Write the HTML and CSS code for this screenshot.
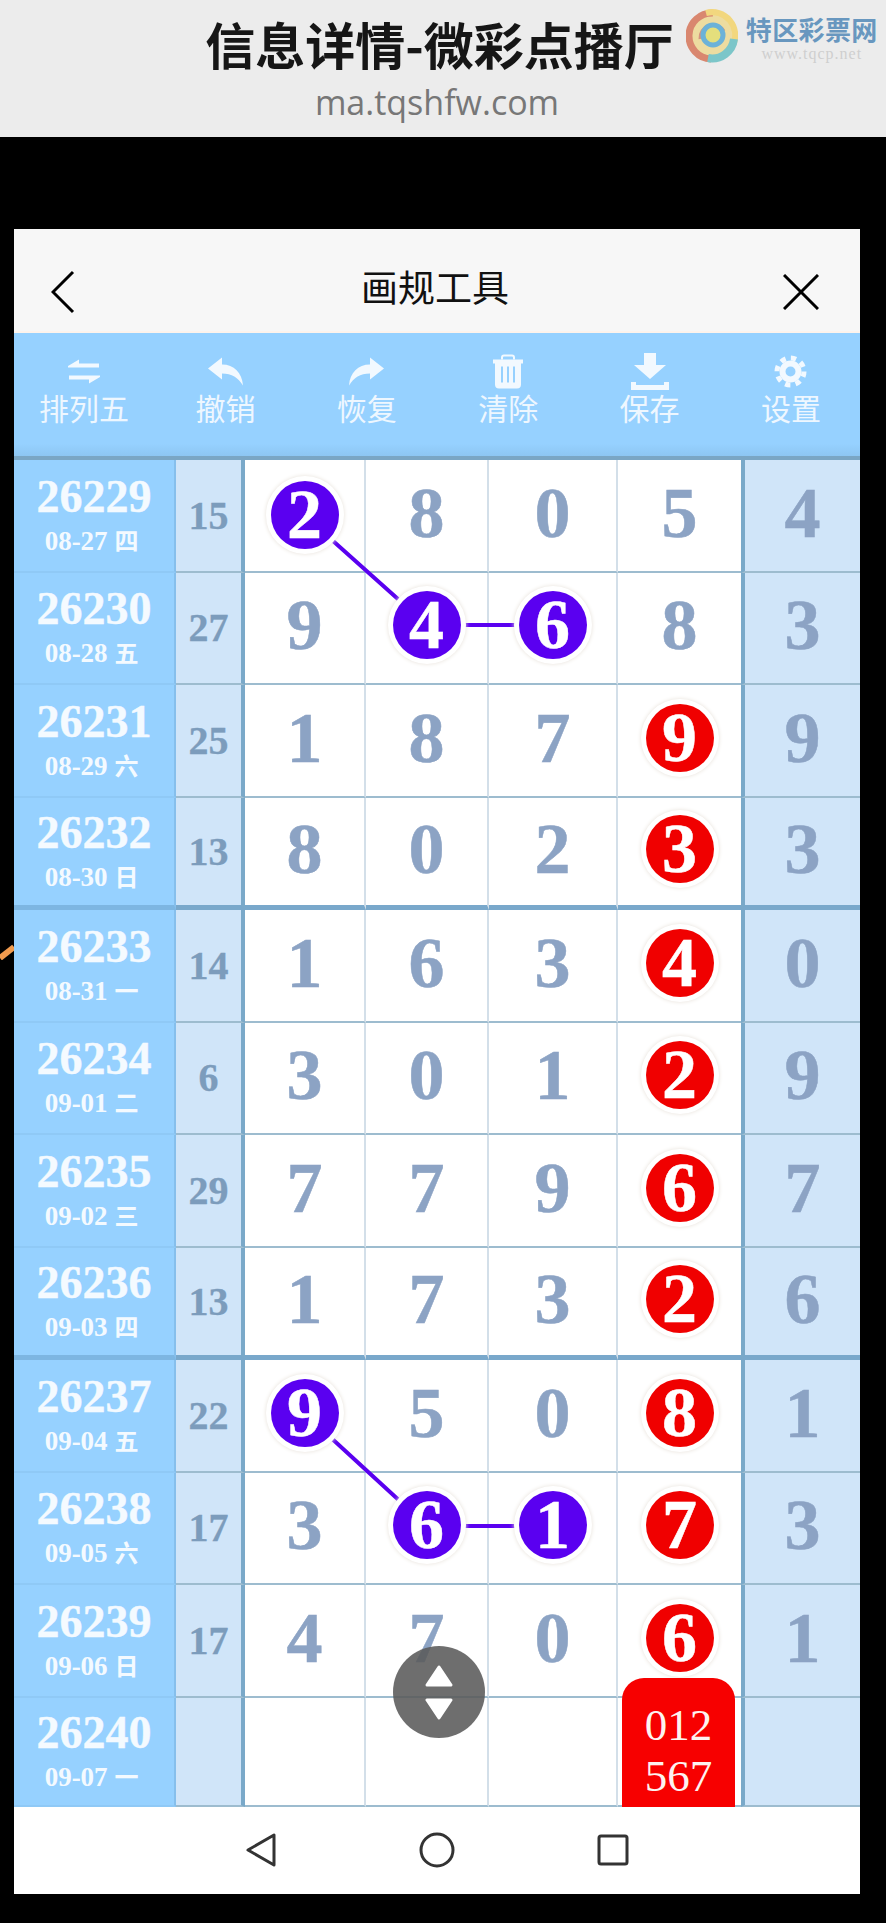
FILE: index.html
```html
<!DOCTYPE html>
<html>
<head>
    <meta charset="utf-8">
    <title>画规工具</title>
    <link rel="stylesheet" href="styles.css">
</head>
<body>
    <div class="site">
        <div class="site-title">信息详情-微彩点播厅</div>
        <div class="logo">
            <svg class="logo-mark" width="52" height="54" viewBox="0 0 52 54">
                <circle cx="26" cy="27" r="25" fill="#eddca0"/>
                <path d="M27 4A23 23 0 0 0 25 50" fill="none" stroke="#d9876f" stroke-width="7"/>
                <path d="M20 4A23 23 0 0 1 47 36" fill="none" stroke="#f2d77e" stroke-width="6"/>
                <path d="M48 30A22 22 0 0 1 22 49" fill="none" stroke="#7cc6c9" stroke-width="8"/>
                <path d="M14 30A13 13 0 0 1 38 22" fill="none" stroke="#d5947f" stroke-width="3"/>
                <circle cx="27" cy="26" r="10" fill="#e4df7c" stroke="#6cb2d8" stroke-width="5"/>
            </svg>
            <div class="logo-text">
                <div class="logo-name">特区彩票网</div>
                <div class="logo-url">www.tqcp.net</div>
            </div>
        </div>
        <div class="site-url">ma.tqshfw.com</div>
    </div>

    <svg class="stray" width="14" height="16" viewBox="0 0 14 16">
        <path d="M0 14L14 3" stroke="#f09a4e" stroke-width="6"/>
    </svg>

    <div class="app">
        <div class="top-bar">
            <svg width="24" height="44" viewBox="0 0 24 44">
                <path d="M22 2L2 22L22 42" fill="none" stroke="#000" stroke-width="3"/>
            </svg>
            <div class="top-title">画规工具</div>
            <svg class="close" width="36" height="36" viewBox="0 0 36 36">
                <path d="M1 1L35 35M35 1L1 35" fill="none" stroke="#000" stroke-width="3"/>
            </svg>
        </div>

        <div class="toolbar">
            <div class="tool">
                <svg width="32" height="24" viewBox="0 0 32 24">
                    <path d="M0 6.5L11 0V4H31V8H0Z M32 17.500L21 24V20H1V16H32Z" fill="#f2f9ff"/>
                </svg>
                <span>排列五</span>
            </div>
            <div class="tool">
                <svg width="35" height="28" viewBox="0 0 35 28">
                    <path d="M0 11L14 0V7C26 7 34 15 35 28C30 20 24 16 14 16V22Z" fill="#f2f9ff"/>
                </svg>
                <span>撤销</span>
            </div>
            <div class="tool">
                <svg width="35" height="28" viewBox="0 0 35 28">
                    <path d="M35 11L21 0V7C9 7 1 15 0 28C5 20 11 16 21 16V22Z" fill="#f2f9ff"/>
                </svg>
                <span>恢复</span>
            </div>
            <div class="tool">
                <svg width="30" height="34" viewBox="0 0 30 34">
                    <path d="M9 5V3Q9 1 11 1H19Q21 1 21 3V5" fill="none" stroke="#f2f9ff" stroke-width="2"/>
                    <path d="M0 5H30V9H28V30Q28 34 24 34H6Q2 34 2 30V9H0Z" fill="#f2f9ff"/>
                    <path d="M9 12V28M15 12V28M21 12V28" stroke="#96d1ff" stroke-width="2"/>
                </svg>
                <span>清除</span>
            </div>
            <div class="tool">
                <svg width="38" height="37" viewBox="0 0 38 37">
                    <path d="M13 0H25V12H35L19 26L3 12H13Z" fill="#f2f9ff"/>
                    <path d="M0 29H5V32H33V29H38V37H0Z" fill="#f2f9ff"/>
                </svg>
                <span>保存</span>
            </div>
            <div class="tool">
                <svg width="33" height="33" viewBox="0 0 33 33">
                    <circle cx="16.500" cy="16.500" r="8" fill="none" stroke="#f2f9ff" stroke-width="6"/>
                    <circle cx="16.500" cy="16.500" r="13.500" fill="none" stroke="#f2f9ff" stroke-width="5" stroke-dasharray="5.300 5.300"/>
                </svg>
                <span>设置</span>
            </div>
        </div>

        <div class="board">
            <div class="row">
                <div class="issue"><b>26229</b><i>08-27 <em>四</em></i></div>
                <div class="sum">15</div>
                <div class="cell"><span class="ball purple">2</span></div>
                <div class="cell">8</div><div class="cell">0</div><div class="cell">5</div>
                <div class="side">4</div>
            </div>
            <div class="row">
                <div class="issue"><b>26230</b><i>08-28 <em>五</em></i></div>
                <div class="sum">27</div>
                <div class="cell">9</div>
                <div class="cell"><span class="ball purple">4</span></div>
                <div class="cell"><span class="ball purple">6</span></div>
                <div class="cell">8</div>
                <div class="side">3</div>
            </div>
            <div class="row">
                <div class="issue"><b>26231</b><i>08-29 <em>六</em></i></div>
                <div class="sum">25</div>
                <div class="cell">1</div><div class="cell">8</div><div class="cell">7</div>
                <div class="cell"><span class="ball red">9</span></div>
                <div class="side">9</div>
            </div>
            <div class="row thick">
                <div class="issue"><b>26232</b><i>08-30 <em>日</em></i></div>
                <div class="sum">13</div>
                <div class="cell">8</div><div class="cell">0</div><div class="cell">2</div>
                <div class="cell"><span class="ball red">3</span></div>
                <div class="side">3</div>
            </div>
            <div class="row">
                <div class="issue"><b>26233</b><i>08-31 <em>一</em></i></div>
                <div class="sum">14</div>
                <div class="cell">1</div><div class="cell">6</div><div class="cell">3</div>
                <div class="cell"><span class="ball red">4</span></div>
                <div class="side">0</div>
            </div>
            <div class="row">
                <div class="issue"><b>26234</b><i>09-01 <em>二</em></i></div>
                <div class="sum">6</div>
                <div class="cell">3</div><div class="cell">0</div><div class="cell">1</div>
                <div class="cell"><span class="ball red">2</span></div>
                <div class="side">9</div>
            </div>
            <div class="row">
                <div class="issue"><b>26235</b><i>09-02 <em>三</em></i></div>
                <div class="sum">29</div>
                <div class="cell">7</div><div class="cell">7</div><div class="cell">9</div>
                <div class="cell"><span class="ball red">6</span></div>
                <div class="side">7</div>
            </div>
            <div class="row thick">
                <div class="issue"><b>26236</b><i>09-03 <em>四</em></i></div>
                <div class="sum">13</div>
                <div class="cell">1</div><div class="cell">7</div><div class="cell">3</div>
                <div class="cell"><span class="ball red">2</span></div>
                <div class="side">6</div>
            </div>
            <div class="row">
                <div class="issue"><b>26237</b><i>09-04 <em>五</em></i></div>
                <div class="sum">22</div>
                <div class="cell"><span class="ball purple">9</span></div>
                <div class="cell">5</div><div class="cell">0</div>
                <div class="cell"><span class="ball red">8</span></div>
                <div class="side">1</div>
            </div>
            <div class="row">
                <div class="issue"><b>26238</b><i>09-05 <em>六</em></i></div>
                <div class="sum">17</div>
                <div class="cell">3</div>
                <div class="cell"><span class="ball purple">6</span></div>
                <div class="cell"><span class="ball purple">1</span></div>
                <div class="cell"><span class="ball red">7</span></div>
                <div class="side">3</div>
            </div>
            <div class="row">
                <div class="issue"><b>26239</b><i>09-06 <em>日</em></i></div>
                <div class="sum">17</div>
                <div class="cell">4</div><div class="cell">7</div><div class="cell">0</div>
                <div class="cell"><span class="ball red">6</span></div>
                <div class="side">1</div>
            </div>
            <div class="row last">
                <div class="issue"><b>26240</b><i>09-07 <em>一</em></i></div>
                <div class="sum"></div>
                <div class="cell"></div><div class="cell"></div><div class="cell"></div>
                <div class="cell"><div class="pick">012<br>567</div></div>
                <div class="side"></div>
            </div>

            <!-- lines between picked balls -->
            <svg class="links" width="846" height="1351" viewBox="0 0 846 1351">
                <path d="M290 59L413 169H539" fill="none" stroke="#5a00f0" stroke-width="4"/>
                <path d="M290 957L413 1070H539" fill="none" stroke="#5a00f0" stroke-width="4"/>
            </svg>

            <div class="fab">
                <svg width="30" height="55" viewBox="0 0 30 55">
                    <path d="M15 2L27 20H3Z M3 35H27L15 53Z" fill="#fff" stroke="#fff" stroke-width="3" stroke-linejoin="round"/>
                </svg>
            </div>
        </div>

        <div class="nav">
            <svg width="32" height="36" viewBox="0 0 32 36">
                <path d="M29 3V33L3 18Z" fill="none" stroke="#333" stroke-width="3" stroke-linejoin="round"/>
            </svg>
            <svg width="36" height="36" viewBox="0 0 36 36">
                <circle cx="18" cy="18" r="16" fill="none" stroke="#333" stroke-width="3"/>
            </svg>
            <svg width="32" height="32" viewBox="0 0 32 32">
                <rect x="2" y="2" width="28" height="28" rx="2" fill="none" stroke="#333" stroke-width="3"/>
            </svg>
        </div>
    </div>
</body>
</html>
```
FILE: styles.css
```css
body {
    margin: 0;
    width: 886px;
    height: 1923px;
    background-color: #000;
    font-family: "Noto Sans CJK SC", sans-serif;
    position: relative;
    overflow: hidden;
}

/* site banner */
.site {
    height: 137px;
    background-color: #ececec;
    display: grid;
    grid-template-columns: 1fr auto 1fr;
    grid-template-rows: 90px 47px;
    box-sizing: border-box;
    padding-right: 7px;
}
.site-title {
    grid-column: 2;
    font-size: 50px;
    font-weight: 700;
    line-height: 86px;
    color: #161616;
}
.logo {
    grid-column: 3;
    display: flex;
    gap: 8px;
    margin-left: 12px;
    padding-top: 9px;
    width: 192px;
    white-space: nowrap;
}
.logo-mark {
    flex: none;
}
.logo-text {
    padding-top: 4px;
}
.logo-name {
    font-size: 26px;
    font-weight: 700;
    line-height: 32px;
    color: #6897bf;
    letter-spacing: 0.4px;
}
.logo-url {
    font-family: "Liberation Serif", serif;
    font-size: 16px;
    line-height: 18px;
    color: #cfcfcf;
    letter-spacing: 1px;
    text-align: center;
}
.site-url {
    grid-column: 1 / 4;
    font-family: "Open Sans", sans-serif;
    font-size: 34px;
    font-weight: 500;
    line-height: 24px;
    color: #777;
    text-align: center;
    padding-right: 5px;
}

.stray {
    position: absolute;
    left: 0;
    top: 944px;
}

/* app window */
.app {
    position: absolute;
    left: 14px;
    top: 229px;
    width: 846px;
    height: 1665px;
    display: flex;
    flex-direction: column;
    background-color: #fff;
}
.top-bar {
    height: 104px;
    flex: none;
    box-sizing: border-box;
    background-color: #f7f7f7;
    border-bottom: 2px solid #fdf3ec;
    display: grid;
    grid-template-columns: 1fr auto 1fr;
    align-items: center;
    padding: 24px 41px 0 37px;
}
.top-title {
    font-size: 37px;
    line-height: 44px;
    color: #111;
    margin-bottom: 12px;
}
.close {
    justify-self: end;
}

.toolbar {
    height: 123px;
    flex: none;
    box-sizing: border-box;
    display: flex;
    justify-content: space-between;
    padding: 0 4px 0 5px;
    background: linear-gradient(#96d1ff 90%, #8dc6f2);
}
.tool {
    width: 130px;
    display: flex;
    flex-direction: column;
    align-items: center;
    color: #eef7ff;
    font-size: 30px;
    line-height: 40px;
}
.tool svg {
    height: 37px;
    margin-top: 20px;
}
.tool span {
    margin-top: -3px;
}

/* results table */
.board {
    flex: none;
    position: relative;
    border-top: 4px solid #7aa6c4;
    box-sizing: border-box;
    height: 1351px;
    font-family: "Liberation Serif", serif;
}
.row {
    display: grid;
    grid-template-columns: 162px 69px 121px 123px 129px 123px 119px;
    height: 112.500px;
    box-sizing: border-box;
}
.row.last {
    height: 109.500px;
}
.issue, .sum, .cell, .side {
    display: flex;
    align-items: center;
    justify-content: center;
    box-sizing: border-box;
    font-weight: 700;
    border-bottom: 2px solid #9dbccf;
    position: relative;
}
.thick .issue, .thick .sum, .thick .cell, .thick .side {
    border-bottom: 5px solid #79a8cb;
}
.issue {
    flex-direction: column;
    background-color: #96d1ff;
    border-bottom: 2px solid #8fc9f6;
    border-right: 2px solid #86bfec;
    color: #f4faff;
}
.thick .issue {
    border-bottom-color: #7db6e2;
}
.issue b {
    font-size: 46px;
    line-height: 46px;
    margin-top: 4px;
    -webkit-text-stroke: 0.4px #f4faff;
}
.issue i {
    font-style: normal;
    font-size: 27px;
    line-height: 40px;
    margin-right: 5px;
}
.issue em {
    font-family: "Noto Sans CJK SC", sans-serif;
    font-style: normal;
    font-size: 24px;
}
.sum {
    background-color: #d0e5f9;
    color: #7c9cbc;
    font-size: 40px;
    border-right: 4px solid #7aa9c9;
    -webkit-text-stroke: 0.3px #7c9cbc;
}
.cell {
    background-color: #fff;
    color: #8ca3c4;
    font-size: 72px;
    line-height: 72px;
    padding-bottom: 5px;
    border-right: 2px solid #d3dfe9;
    -webkit-text-stroke: 0.5px #8ca3c4;
}
.cell:nth-child(6) {
    border-right: none;
}
.side {
    background-color: #d0e5f9;
    color: #8ca3c4;
    font-size: 72px;
    line-height: 72px;
    padding-bottom: 5px;
    border-left: 4px solid #7aa9c9;
    -webkit-text-stroke: 0.5px #8ca3c4;
}
.ball {
    position: relative;
    z-index: 2;
    width: 68px;
    height: 68px;
    border-radius: 50%;
    display: flex;
    align-items: center;
    justify-content: center;
    color: #fff;
    font-size: 70px;
    line-height: 64px;
    -webkit-text-stroke: 0.5px #fff;
    box-shadow: 0 0 0 5px #fff, 0 0 4px 5px #e6e0d8;
}
.row:first-child .ball {
    margin-top: 5px;
}
.purple {
    background-color: #5a00f0;
}
.red {
    background-color: #f00000;
}
.pick {
    position: absolute;
    left: 4px;
    right: 6px;
    bottom: -2px;
    height: 129px;
    z-index: 3;
    box-sizing: border-box;
    padding-top: 22px;
    background-color: #f70000;
    border-radius: 22px 22px 0 0;
    color: #fdf3f0;
    font-size: 45px;
    font-weight: 400;
    line-height: 51px;
    text-align: center;
    -webkit-text-stroke: 0;
}
.links {
    position: absolute;
    left: 0;
    top: -4px;
    z-index: 1;
}
.fab {
    position: absolute;
    z-index: 4;
    left: 379px;
    top: 1186px;
    width: 92px;
    height: 92px;
    border-radius: 50%;
    background-color: rgba(90, 90, 90, 0.88);
    display: flex;
    align-items: center;
    justify-content: center;
}

/* phone navigation */
.nav {
    flex: 1;
    display: flex;
    align-items: center;
    justify-content: center;
    gap: 142px;
    padding-bottom: 2px;
}
```
